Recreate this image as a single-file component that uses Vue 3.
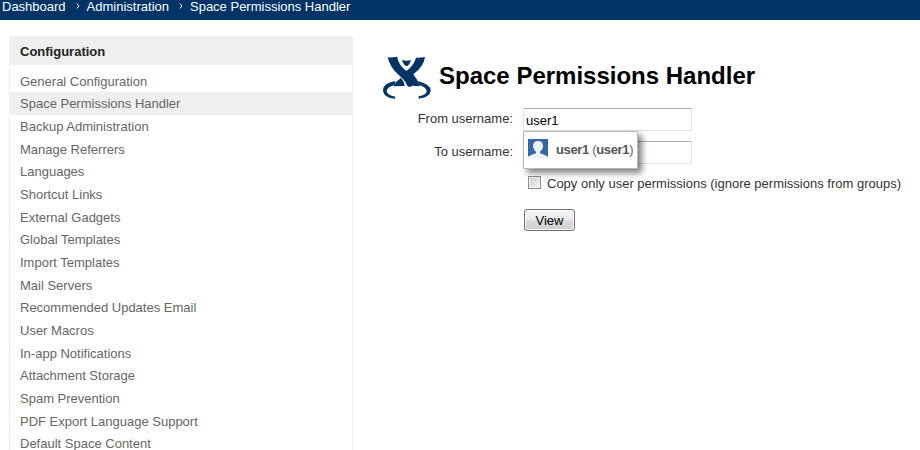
<script setup>
import { ref } from 'vue'

const crumbs = ['Dashboard', 'Administration', 'Space Permissions Handler']
const items = [
  'General Configuration',
  'Space Permissions Handler',
  'Backup Administration',
  'Manage Referrers',
  'Languages',
  'Shortcut Links',
  'External Gadgets',
  'Global Templates',
  'Import Templates',
  'Mail Servers',
  'Recommended Updates Email',
  'User Macros',
  'In-app Notifications',
  'Attachment Storage',
  'Spam Prevention',
  'PDF Export Language Support',
  'Default Space Content',
]
const active = 'Space Permissions Handler'
const fromUser = ref('user1')
const toUser = ref('')
const copyOnly = ref(false)
</script>

<template>
  <div class="page">
    <nav class="topbar">
      <template v-for="(crumb, i) in crumbs" :key="crumb">
        <svg v-if="i" class="chevron" viewBox="0 0 4 6"><path d="M.8.5 3 3 .8 5.5" /></svg>
        <a>{{ crumb }}</a>
      </template>
    </nav>
    <div class="body">
      <aside class="sidebar">
        <h2>Configuration</h2>
        <ul>
          <li v-for="item in items" :key="item" :class="{ active: item === active }">{{ item }}</li>
        </ul>
      </aside>
      <main class="content">
        <header class="title">
          <svg class="logo" viewBox="39 33 144 129">
            <path d="M53 37Q68 38 81 35Q86 57 100 70L109 78Q131 63 138 38Q151 39 165 36Q161 65 130 88Q142 102 149 124L126 122Q119 129 112 122Q107 110 99 102L87 91Q60 68 53 37Z" />
            <path d="M96 45Q109 49 123 45Q119 60 110 64Q100 60 96 45Z" />
            <path d="M93 98Q102 108 104 123L71 124Q75 110 86 105Z" />
            <path d="M75 108Q38 115 39 137Q41 158 75 161L76 155Q50 150 50 138Q51 126 74 120Z" />
            <path d="M144 108Q184 119 182 138Q179 158 146 161L146 154Q171 149 170 137Q168 126 146 120Z" />
          </svg>
          <h1>Space Permissions Handler</h1>
        </header>
        <form class="form" @submit.prevent>
          <div class="row">
            <label for="from">From username:</label>
            <div class="field">
              <input id="from" v-model="fromUser" type="text" autocomplete="off" />
              <div class="suggestion">
                <svg class="avatar" viewBox="0 0 20 20">
                  <rect width="20" height="20" fill="#3568a5" />
                  <path d="M0 20v-2.2q2-1.6 4.5-2.3L8 14.2v-1.5Q6 11.4 5.7 9.4 4.6 8.6 5 7.2q.1-5.2 5-5.2t5 5.2q.4 1.4-.7 2.2-.3 2-2.3 3.3v1.5l3.5 1.3q2.5.7 4.5 2.3V20z" fill="#eef3f7" />
                </svg>
                <span><b>user1</b> (<b>user1</b>)</span>
              </div>
            </div>
          </div>
          <div class="row">
            <label for="to">To username:</label>
            <div class="field"><input id="to" v-model="toUser" type="text" /></div>
          </div>
          <label class="check">
            <input v-model="copyOnly" type="checkbox" />
            <span>Copy only user permissions (ignore permissions from groups)</span>
          </label>
          <button type="submit">View</button>
        </form>
      </main>
    </div>
  </div>
</template>

<style>
body {
  margin: 0;
  overflow: hidden;
  background: #fff;
}
</style>

<style scoped>
* {
  box-sizing: border-box;
}
.page {
  width: 920px;
  height: 450px;
  overflow: hidden;
  font: 13px/15px "Liberation Sans", Arial, sans-serif;
  color: #333;
}
.topbar {
  display: flex;
  height: 20px;
  padding-left: 2px;
  background: #036;
  color: #fff;
  line-height: 14px;
  white-space: nowrap;
}
.chevron {
  width: 4px;
  height: 6px;
  margin: 3px 7px 0 10px;
  fill: none;
  stroke: #fff;
  stroke-width: 1;
}
.body {
  display: flex;
  gap: 30px;
  padding: 16px 0 0 9px;
}
.sidebar {
  flex: none;
  width: 344px;
  height: 430px;
  border: 1px solid #efefef;
  border-radius: 3px 3px 0 0;
}
h2 {
  height: 28px;
  margin: 0;
  padding-left: 10px;
  background: #efefef;
  color: #222;
  font-size: 13px;
  line-height: 29px;
}
ul {
  margin: 0;
  padding: 4.7px 0 0;
  list-style: none;
}
li {
  height: 22.67px;
  padding-left: 10px;
  color: #666;
  line-height: 24.6px;
  white-space: nowrap;
}
.active {
  background: #efefef;
}
.content {
  flex: 1;
  padding-top: 20px;
}
.title {
  display: flex;
  gap: 8px;
  height: 44px;
}
.logo {
  width: 48px;
  height: 43px;
  fill: #036;
}
h1 {
  margin: 0;
  color: #000;
  font-size: 24px;
  line-height: 40px;
  white-space: nowrap;
}
.form {
  padding-top: 8px;
}
.row {
  display: flex;
  gap: 10px;
  height: 33px;
}
.row label {
  width: 130px;
  padding-top: 3px;
  text-align: right;
}
.field {
  position: relative;
}
.field input {
  display: block;
  width: 169px;
  height: 23px;
  padding: 2px 2px 0;
  border: 1px solid #dfe2e8;
  border-top-color: #abadb3;
  border-radius: 1px;
  outline: 0;
  background: #fff;
  color: #000;
  font: inherit;
}
.suggestion {
  position: absolute;
  z-index: 1;
  top: 23px;
  left: 0;
  display: flex;
  align-items: center;
  gap: 8px;
  width: 115px;
  height: 38px;
  padding: 0 0 2px 4px;
  border: 1px solid #b4b8bd;
  border-radius: 1px;
  background: #fff;
  box-shadow: 4px 4px 6px rgba(0, 0, 0, 0.5);
  color: #666;
  letter-spacing: -0.35px;
  white-space: nowrap;
}
.suggestion b {
  color: #555;
}
.avatar {
  flex: none;
  width: 20px;
  height: 20px;
}
.check {
  display: flex;
  gap: 6px;
  padding: 2px 0 0 145px;
  white-space: nowrap;
}
.check input {
  width: 13px;
  height: 13px;
  margin: 0;
  border: 1px solid #8e8f8f;
  outline: 1px solid #f4f4f4;
  outline-offset: -2px;
  appearance: none;
  background: linear-gradient(135deg, #cbcfd5, #f6f6f6);
}
button {
  display: block;
  width: 51px;
  height: 22px;
  margin: 18px 0 0 141px;
  padding: 0;
  border: 1px solid #707070;
  border-radius: 3px;
  background: linear-gradient(#f2f2f2, #ebebeb 50%, #ddd 50%, #cfcfcf);
  box-shadow: inset 0 0 0 1px #fbfbfb;
  color: #000;
  font: inherit;
}
</style>
